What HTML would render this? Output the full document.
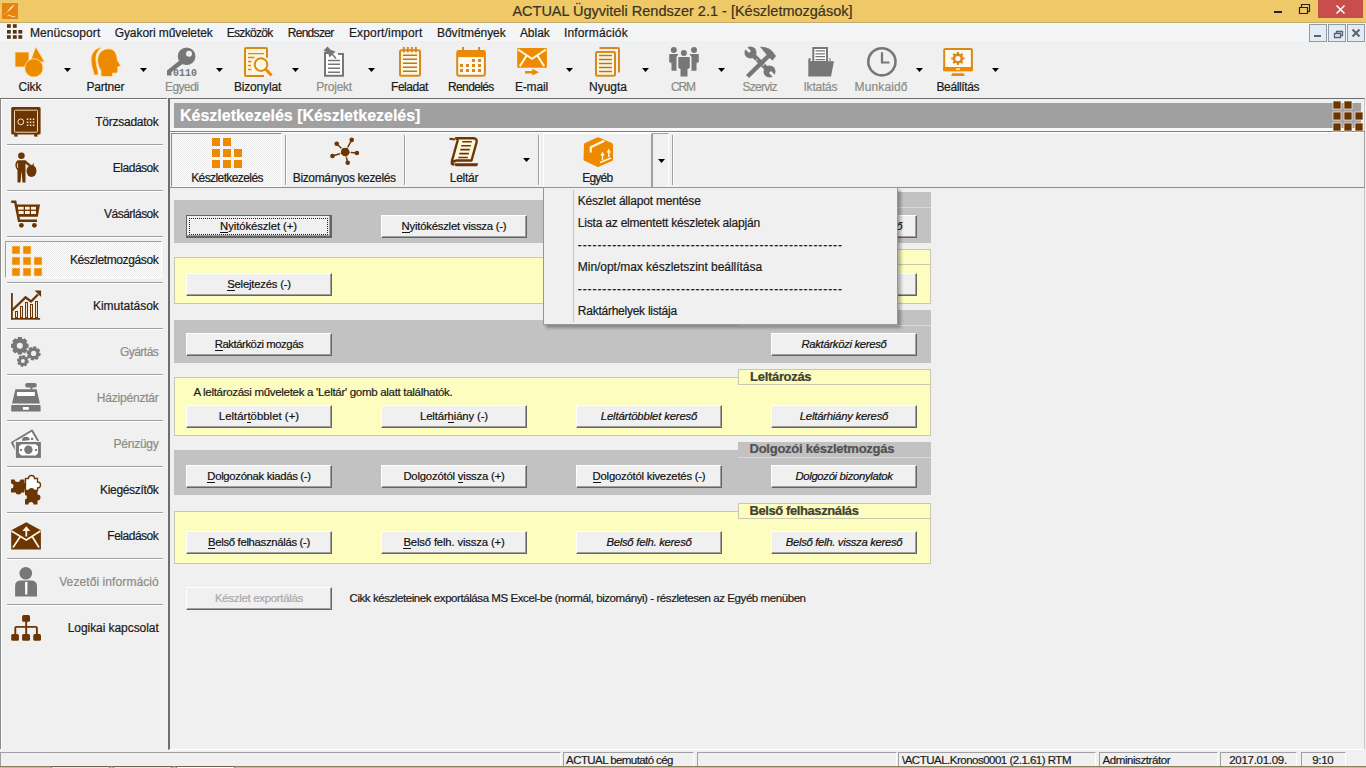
<!DOCTYPE html>
<html><head><meta charset="utf-8">
<style>
*{box-sizing:border-box}
html,body{margin:0;padding:0;width:1366px;height:768px;overflow:hidden;background:#f0f0f0;font-family:"Liberation Sans",sans-serif;color:#1a1a1a}
.a{position:absolute}
.t{position:absolute;white-space:pre;line-height:1;-webkit-text-stroke:0.2px currentColor}
#title{left:0;top:0;width:1366px;height:24px;background:#efc868;border-bottom:1px solid #fdf6e0}
#title:after{content:"";position:absolute;left:0;top:22px;width:1366px;height:1px;background:#c4aa6e}
#menubar{left:0;top:24px;width:1366px;height:18px;background:#f4f5f7;border-bottom:1px solid #e5e6e7}
#toolbar{left:0;top:41px;width:1366px;height:56px;background:#f0f0f0}
#side{left:0;top:98px;width:167px;height:651px;border-top:1px solid #6e6e6e;border-left:1px solid #8a8a8a;background:#f0f0f0}
#side:after{content:"";position:absolute;left:0;top:0;right:0;bottom:0;border-top:1px solid #fff;border-left:1px solid #fff}
.sep{position:absolute;left:7px;width:156px;height:2px;border-top:1px solid #a0a0a0;border-bottom:1px solid #fff}
#main{left:168px;top:98px;width:1197px;height:652px;border-top:1px solid #6e6e6e;border-left:2px solid #6e6e6e;border-right:1px solid #c8c8c8;border-bottom:1px solid #fff;background:#f0f0f0}
#hdr{left:174px;top:103px;width:1187px;height:25px;background:#a0a0a0}
#tabstrip{left:170px;top:131px;width:1195px;height:57px;border-top:1px solid #808080;border-bottom:1px solid #8e8e8e;border-right:1px solid #a0a0a0;background:#f0f0f0}
#tabstrip:before{content:"";position:absolute;left:0;right:0;top:0;height:1px;background:#fff}
#hdrgap{left:170px;top:128px;width:1193px;height:3px;background:#f8f8f8}
.chk{background:repeating-conic-gradient(#ffffff 0 25%,#e9e9e9 0 50%) 0 0/2px 2px}
#seltab{left:171px;top:133px;width:111px;height:54px;border-top:1px solid #8a8a8a;border-left:1px solid #8a8a8a;border-right:1px solid #fff;border-bottom:1px solid #fff}
#egy{left:543px;top:133px;width:109px;height:54px;border-top:1px solid #fff;border-left:1px solid #fff;border-right:1px solid #a0a0a0}
#egyd{left:652px;top:133px;width:17px;height:54px;border-top:1px solid #a0a0a0;border-left:1px solid #a0a0a0;border-right:1px solid #fff}
#popsep{left:573px;top:190px;width:1px;height:132px;background:#c8c8c8}
.vsep{position:absolute;width:2px;border-left:1px solid #a0a0a0;border-right:1px solid #fff}
.sec{position:absolute;left:174px;width:757px}
.gray{background:#c2c2c2}
.yel{background:#fdfdc0;border:1px solid #c8c8b0}
.stab{position:absolute;left:738px;width:193px;height:16px}
.stab.gray{background:#c2c2c2;border-bottom:1px solid #d8d8d8}
.stab.yel{background:#fdfdc0;border:1px solid #c8c8b0}
.btn{position:absolute;width:146px;height:23px;background:#f0f0f0;border-top:1px solid #fff;border-left:1px solid #fff;border-right:1px solid #646464;border-bottom:1px solid #646464;font-size:11.3px;text-align:center;line-height:20px;white-space:pre;color:#111}
.btn:before{content:"";position:absolute;left:0;top:0;right:0;bottom:0;border-right:1px solid #a0a0a0;border-bottom:1px solid #a0a0a0}
.btn span{position:relative;-webkit-text-stroke:0.2px currentColor}
.btn.it{font-style:italic}
.btn.dis{color:#a8a8a8}
.btn.foc{border:1px solid #646464;border-right:2px solid #646464;border-bottom:2px solid #646464}
.btn.foc:after{content:"";position:absolute;left:2px;top:2px;right:2px;bottom:1px;border:1px dotted #222}
u{text-decoration:none;border-bottom:1px solid currentColor}
#popup{left:543px;top:187px;width:355px;height:138px;background:#f0f0f0;border:1px solid #979797;box-shadow:3px 3px 3px rgba(0,0,0,.3)}
#status{left:0;top:750px;width:1366px;height:18px;background:#f0f0f0}
.sp{position:absolute;top:752px;height:14px;border-top:1px solid #a0a0a0;border-left:1px solid #a0a0a0;border-right:1px solid #fff}
</style></head><body>
<div id="title" class="a"></div>
<div id="menubar" class="a"></div>
<div id="toolbar" class="a"></div>
<div id="side" class="a"></div>
<div id="main" class="a"></div>
<div id="hdr" class="a"></div>
<div id="hdrgap" class="a"></div>
<div id="tabstrip" class="a"></div>
<div id="seltab" class="a chk"></div>
<div id="egy" class="a"></div>
<div id="egyd" class="a"></div>
<div class="sep" style="top:144px"></div>
<div class="sep" style="top:190px"></div>
<div class="sep" style="top:236px"></div>
<div class="sep" style="top:282px"></div>
<div class="sep" style="top:328px"></div>
<div class="sep" style="top:374px"></div>
<div class="sep" style="top:420px"></div>
<div class="sep" style="top:466px"></div>
<div class="sep" style="top:512px"></div>
<div class="sep" style="top:558px"></div>
<div class="sep" style="top:604px"></div>
<div class="a chk" style="left:5px;top:241px;width:157px;height:37px;border-top:1px solid #a0a0a0;border-left:1px solid #a0a0a0;border-bottom:1px solid #fff;border-right:1px solid #fff;"></div>
<div class="sec gray" style="top:200px;height:43px"></div>
<div class="stab gray" style="top:192px"></div>
<div class="sec yel" style="top:257px;height:47px"></div>
<div class="stab yel" style="top:249px"></div>
<div class="sec gray" style="top:320px;height:43px"></div>
<div class="stab gray" style="top:310px"></div>
<div class="sec yel" style="top:377px;height:59px"></div>
<div class="stab yel" style="top:369px"></div>
<div class="sec gray" style="top:450px;height:45px"></div>
<div class="stab gray" style="top:442px"></div>
<div class="sec yel" style="top:511px;height:53px"></div>
<div class="stab yel" style="top:503px"></div>
<div class="vsep" style="left:285px;top:135px;height:50px"></div>
<div class="vsep" style="left:404px;top:135px;height:50px"></div>
<div class="vsep" style="left:538px;top:135px;height:50px"></div>
<div class="vsep" style="left:672px;top:135px;height:50px"></div>
<div class="btn foc" style="left:186px;top:215px"><span style="letter-spacing:-0.078px"><u>N</u>yitókészlet (+)</span></div>
<div class="btn" style="left:381px;top:215px"><span style="letter-spacing:-0.221px"><u>N</u>yitókészlet vissza (-)</span></div>
<div class="btn it" style="left:771px;top:215px"><span style="letter-spacing:-0.450px">Nyitókészlet részl. kereső</span></div>
<div class="btn" style="left:186px;top:273px"><span style="letter-spacing:-0.211px"><u>S</u>elejtezés (-)</span></div>
<div class="btn it" style="left:771px;top:273px"><span style="letter-spacing:-0.450px">Selejtezés kereső</span></div>
<div class="btn" style="left:186px;top:333px"><span style="letter-spacing:-0.454px"><u>R</u>aktárközi mozgás</span></div>
<div class="btn it" style="left:771px;top:333px"><span style="letter-spacing:-0.314px">Raktárközi kereső</span></div>
<div class="btn" style="left:186px;top:405px"><span style="letter-spacing:0.048px">Leltár<u>t</u>öbblet (+)</span></div>
<div class="btn" style="left:381px;top:405px"><span style="letter-spacing:-0.122px">Leltár<u>h</u>iány (-)</span></div>
<div class="btn it" style="left:576px;top:405px"><span style="letter-spacing:-0.144px">Leltártöbblet kereső</span></div>
<div class="btn it" style="left:771px;top:405px"><span style="letter-spacing:-0.218px">Leltárhiány kereső</span></div>
<div class="btn" style="left:186px;top:465px"><span style="letter-spacing:-0.315px"><u>D</u>olgozónak kiadás (-)</span></div>
<div class="btn" style="left:381px;top:465px"><span style="letter-spacing:-0.189px">Dolgozótól <u>v</u>issza (+)</span></div>
<div class="btn" style="left:576px;top:465px"><span style="letter-spacing:-0.219px"><u>D</u>olgozótól kivezetés (-)</span></div>
<div class="btn it" style="left:771px;top:465px"><span style="letter-spacing:-0.322px">Dolgozói bizonylatok</span></div>
<div class="btn" style="left:186px;top:531px"><span style="letter-spacing:-0.301px"><u>B</u>első felhasználás (-)</span></div>
<div class="btn" style="left:381px;top:531px"><span style="letter-spacing:-0.150px"><u>B</u>első felh. vissza (+)</span></div>
<div class="btn it" style="left:576px;top:531px"><span style="letter-spacing:-0.259px">Belső felh. kereső</span></div>
<div class="btn it" style="left:771px;top:531px"><span style="letter-spacing:-0.314px">Belső felh. vissza kereső</span></div>
<div class="btn dis" style="left:186px;top:587px"><span style="letter-spacing:-0.242px">Készlet exportálás</span></div>
<div id="popup" class="a"></div>
<div id="popsep" class="a"></div>
<div class="sp" style="left:0px;width:561px"></div>
<div class="sp" style="left:563px;width:131px"></div>
<div class="sp" style="left:697px;width:200px"></div>
<div class="sp" style="left:898px;width:198px"></div>
<div class="sp" style="left:1099px;width:119px"></div>
<div class="sp" style="left:1220px;width:77px"></div>
<div class="sp" style="left:1301px;width:45px"></div>
<div class="a" style="left:0;top:766px;width:1366px;height:2px;background:#c9b999;border-top:1px solid #8f8062"></div>
<div class="a" style="left:51px;top:766px;width:59px;height:2px;background:#ebe5d2;border-top:1px solid #6f6450;border-left:1px solid #8f8062;border-right:1px solid #8f8062"></div>
<div class="a" style="left:113px;top:766px;width:59px;height:2px;background:#ebe5d2;border-top:1px solid #6f6450;border-left:1px solid #8f8062;border-right:1px solid #8f8062"></div>
<div class="a" style="left:176px;top:766px;width:59px;height:2px;background:#fbfaf6;border-top:1px solid #6f6450;border-left:1px solid #8f8062;border-right:1px solid #8f8062"></div>
<div class="t" style="left:512.4px;top:4.1px;font-size:14.5px;font-weight:normal;font-style:normal;color:#3a3320;letter-spacing:-0.005px">ACTUAL Ügyviteli Rendszer 2.1 - [Készletmozgások]</div>
<div class="t" style="left:29.9px;top:26.5px;font-size:12px;font-weight:normal;font-style:normal;color:#1a1a1a;letter-spacing:0.103px">Menücsoport</div>
<div class="t" style="left:114.7px;top:26.5px;font-size:12px;font-weight:normal;font-style:normal;color:#1a1a1a;letter-spacing:-0.080px">Gyakori műveletek</div>
<div class="t" style="left:226.7px;top:26.5px;font-size:12px;font-weight:normal;font-style:normal;color:#1a1a1a;letter-spacing:-0.680px">Eszközök</div>
<div class="t" style="left:287.7px;top:26.5px;font-size:12px;font-weight:normal;font-style:normal;color:#1a1a1a;letter-spacing:-0.694px">Rendszer</div>
<div class="t" style="left:348.9px;top:26.5px;font-size:12px;font-weight:normal;font-style:normal;color:#1a1a1a;letter-spacing:0.170px">Export/import</div>
<div class="t" style="left:437.0px;top:26.5px;font-size:12px;font-weight:normal;font-style:normal;color:#1a1a1a;letter-spacing:-0.068px">Bővítmények</div>
<div class="t" style="left:519.9px;top:26.5px;font-size:12px;font-weight:normal;font-style:normal;color:#1a1a1a;letter-spacing:-0.033px">Ablak</div>
<div class="t" style="left:563.9px;top:26.5px;font-size:12px;font-weight:normal;font-style:normal;color:#1a1a1a;letter-spacing:0.177px">Információk</div>
<div class="t" style="left:18.5px;top:81.1px;font-size:12px;font-weight:normal;font-style:normal;color:#1a1a1a;letter-spacing:-0.115px">Cikk</div>
<div class="t" style="left:86.5px;top:81.1px;font-size:12px;font-weight:normal;font-style:normal;color:#1a1a1a;letter-spacing:-0.227px">Partner</div>
<div class="t" style="left:165.0px;top:81.1px;font-size:12px;font-weight:normal;font-style:normal;color:#8c8c84;letter-spacing:-0.541px">Egyedi</div>
<div class="t" style="left:233.9px;top:81.1px;font-size:12px;font-weight:normal;font-style:normal;color:#1a1a1a;letter-spacing:-0.163px">Bizonylat</div>
<div class="t" style="left:316.3px;top:81.1px;font-size:12px;font-weight:normal;font-style:normal;color:#8c8c84;letter-spacing:-0.243px">Projekt</div>
<div class="t" style="left:391.0px;top:81.1px;font-size:12px;font-weight:normal;font-style:normal;color:#1a1a1a;letter-spacing:-0.455px">Feladat</div>
<div class="t" style="left:448.1px;top:81.1px;font-size:12px;font-weight:normal;font-style:normal;color:#1a1a1a;letter-spacing:-0.658px">Rendelés</div>
<div class="t" style="left:514.9px;top:81.1px;font-size:12px;font-weight:normal;font-style:normal;color:#1a1a1a;letter-spacing:-0.163px">E-mail</div>
<div class="t" style="left:589.1px;top:81.1px;font-size:12px;font-weight:normal;font-style:normal;color:#1a1a1a;letter-spacing:-0.046px">Nyugta</div>
<div class="t" style="left:671.1px;top:81.1px;font-size:12px;font-weight:normal;font-style:normal;color:#8c8c84;letter-spacing:-1.214px">CRM</div>
<div class="t" style="left:742.5px;top:81.1px;font-size:12px;font-weight:normal;font-style:normal;color:#8c8c84;letter-spacing:-0.724px">Szerviz</div>
<div class="t" style="left:803.5px;top:81.1px;font-size:12px;font-weight:normal;font-style:normal;color:#8c8c84;letter-spacing:-0.227px">Iktatás</div>
<div class="t" style="left:854.5px;top:81.1px;font-size:12px;font-weight:normal;font-style:normal;color:#8c8c84;letter-spacing:0.138px">Munkaidő</div>
<div class="t" style="left:936.5px;top:81.1px;font-size:12px;font-weight:normal;font-style:normal;color:#1a1a1a;letter-spacing:-0.379px">Beállítás</div>
<div class="t" style="left:95.2px;top:115.6px;font-size:12px;font-weight:normal;font-style:normal;color:#1a1a1a;letter-spacing:-0.243px">Törzsadatok</div>
<div class="t" style="left:112.8px;top:161.6px;font-size:12px;font-weight:normal;font-style:normal;color:#1a1a1a;letter-spacing:-0.482px">Eladások</div>
<div class="t" style="left:104.0px;top:207.6px;font-size:12px;font-weight:normal;font-style:normal;color:#1a1a1a;letter-spacing:-0.508px">Vásárlások</div>
<div class="t" style="left:69.9px;top:253.6px;font-size:12px;font-weight:normal;font-style:normal;color:#1a1a1a;letter-spacing:-0.368px">Készletmozgások</div>
<div class="t" style="left:92.9px;top:299.6px;font-size:12px;font-weight:normal;font-style:normal;color:#1a1a1a;letter-spacing:-0.013px">Kimutatások</div>
<div class="t" style="left:119.9px;top:345.6px;font-size:12px;font-weight:normal;font-style:normal;color:#8c8c84;letter-spacing:-0.519px">Gyártás</div>
<div class="t" style="left:96.8px;top:391.6px;font-size:12px;font-weight:normal;font-style:normal;color:#8c8c84;letter-spacing:-0.203px">Házipénztár</div>
<div class="t" style="left:113.5px;top:437.6px;font-size:12px;font-weight:normal;font-style:normal;color:#8c8c84;letter-spacing:-0.234px">Pénzügy</div>
<div class="t" style="left:100.1px;top:483.6px;font-size:12px;font-weight:normal;font-style:normal;color:#1a1a1a;letter-spacing:-0.335px">Kiegészítők</div>
<div class="t" style="left:107.3px;top:529.6px;font-size:12px;font-weight:normal;font-style:normal;color:#1a1a1a;letter-spacing:-0.484px">Feladások</div>
<div class="t" style="left:59.2px;top:575.6px;font-size:12px;font-weight:normal;font-style:normal;color:#8c8c84;letter-spacing:0.090px">Vezetői információ</div>
<div class="t" style="left:67.7px;top:621.6px;font-size:12px;font-weight:normal;font-style:normal;color:#1a1a1a;letter-spacing:-0.060px">Logikai kapcsolat</div>
<div class="t" style="left:180.1px;top:107.8px;font-size:16px;font-weight:bold;font-style:normal;color:#ffffff;letter-spacing:-0.024px">Készletkezelés [Készletkezelés]</div>
<div class="t" style="left:191.2px;top:172.2px;font-size:12px;font-weight:normal;font-style:normal;color:#1a1a1a;letter-spacing:-0.596px">Készletkezelés</div>
<div class="t" style="left:292.8px;top:172.0px;font-size:12px;font-weight:normal;font-style:normal;color:#1a1a1a;letter-spacing:-0.364px">Bizományos kezelés</div>
<div class="t" style="left:449.8px;top:172.0px;font-size:12px;font-weight:normal;font-style:normal;color:#1a1a1a;letter-spacing:-0.266px">Leltár</div>
<div class="t" style="left:582.2px;top:172.0px;font-size:12px;font-weight:normal;font-style:normal;color:#1a1a1a;letter-spacing:-0.758px">Egyéb</div>
<div class="t" style="left:750.1px;top:369.8px;font-size:13px;font-weight:bold;font-style:normal;color:#404030;letter-spacing:-0.312px">Leltározás</div>
<div class="t" style="left:749.5px;top:441.8px;font-size:13px;font-weight:bold;font-style:normal;color:#505050;letter-spacing:-0.250px">Dolgozói készletmozgás</div>
<div class="t" style="left:749.5px;top:503.8px;font-size:13px;font-weight:bold;font-style:normal;color:#404030;letter-spacing:-0.408px">Belső felhasználás</div>
<div class="t" style="left:193.4px;top:386.6px;font-size:11.5px;font-weight:normal;font-style:normal;color:#1a1a1a;letter-spacing:-0.298px">A leltározási műveletek a &#x27;Leltár&#x27; gomb alatt találhatók.</div>
<div class="t" style="left:349.5px;top:593.1px;font-size:11.5px;font-weight:normal;font-style:normal;color:#1a1a1a;letter-spacing:-0.427px">Cikk készleteinek exportálása MS Excel-be (normál, bizományi) - részletesen az Egyéb menüben</div>
<div class="t" style="left:577.8px;top:195.3px;font-size:12px;font-weight:normal;font-style:normal;color:#1a1a1a;letter-spacing:-0.200px">Készlet állapot mentése</div>
<div class="t" style="left:577.8px;top:217.2px;font-size:12px;font-weight:normal;font-style:normal;color:#1a1a1a;letter-spacing:-0.204px">Lista az elmentett készletek alapján</div>
<div class="t" style="left:577.8px;top:238.5px;font-size:12px;font-weight:normal;font-style:normal;color:#1a1a1a;letter-spacing:0.913px">------------------------------------------------------</div>
<div class="t" style="left:577.8px;top:261.3px;font-size:12px;font-weight:normal;font-style:normal;color:#1a1a1a;letter-spacing:-0.033px">Min/opt/max készletszint beállítása</div>
<div class="t" style="left:577.8px;top:282.6px;font-size:12px;font-weight:normal;font-style:normal;color:#1a1a1a;letter-spacing:0.913px">------------------------------------------------------</div>
<div class="t" style="left:577.8px;top:305.0px;font-size:12px;font-weight:normal;font-style:normal;color:#1a1a1a;letter-spacing:-0.250px">Raktárhelyek listája</div>
<div class="t" style="left:566.1px;top:754.9px;font-size:11.5px;font-weight:normal;font-style:normal;color:#1a1a1a;letter-spacing:-0.579px">ACTUAL bemutató cég</div>
<div class="t" style="left:902.0px;top:754.9px;font-size:11.5px;font-weight:normal;font-style:normal;color:#1a1a1a;letter-spacing:-0.501px">\ACTUAL.Kronos0001 (2.1.61) RTM</div>
<div class="t" style="left:1102.5px;top:754.9px;font-size:11.5px;font-weight:normal;font-style:normal;color:#1a1a1a;letter-spacing:-0.423px">Adminisztrátor</div>
<div class="t" style="left:1229.2px;top:754.9px;font-size:11.5px;font-weight:normal;font-style:normal;color:#1a1a1a;letter-spacing:-0.277px">2017.01.09.</div>
<div class="t" style="left:1312.3px;top:754.9px;font-size:11.5px;font-weight:normal;font-style:normal;color:#1a1a1a;letter-spacing:-0.364px">9:10</div>
<svg class="a" style="left:0;top:0" width="1366" height="768" viewBox="0 0 1366 768"><rect x="2" y="3" width="16" height="16" fill="#e8830f"/><path d="M14.5 4 Q13 8 7 12.5 L6 13.5 Q9 8 14.5 4Z" fill="#fff3d0"/><path d="M5 13.8 L4.5 14.5 M7.5 16 Q9.5 14.5 11 16 Q12.5 17 15 16.5" stroke="#fff3d0" stroke-width="0.9" fill="none"/><rect x="7" y="24.2" width="3.8" height="3.6" fill="#5a3210"/><rect x="12.9" y="24.2" width="3.8" height="3.6" fill="#5a3210"/><rect x="7" y="30" width="3.8" height="3.6" fill="#5a3210"/><rect x="12.9" y="30" width="3.8" height="3.6" fill="#5a3210"/><rect x="18.4" y="30" width="3.8" height="3.6" fill="#5a3210"/><rect x="7" y="35.2" width="3.8" height="3.6" fill="#5a3210"/><rect x="12.9" y="35.2" width="3.8" height="3.6" fill="#5a3210"/><rect x="18.4" y="35.2" width="3.8" height="3.6" fill="#5a3210"/><rect x="1309.5" y="24.5" width="17" height="17" fill="#e3ecf5" stroke="#8d9aa8"/><rect x="1328.5" y="24.5" width="17" height="17" fill="#e3ecf5" stroke="#8d9aa8"/><rect x="1347.5" y="24.5" width="17" height="17" fill="#e3ecf5" stroke="#8d9aa8"/><rect x="1314" y="35" width="7" height="2" fill="#59636e"/><path d="M1334.5 33.5h6v4h-6z M1336.5 33.5v-2h6v4h-2" stroke="#59636e" stroke-width="1.3" fill="none"/><path d="M1352.5 29.5l7 7 M1359.5 29.5l-7 7" stroke="#59636e" stroke-width="2"/><rect x="1274" y="11" width="8" height="2" fill="#222"/><path d="M1299.5 7.5h8v6h-8z M1301.5 7.5v-3h8v7h-2" stroke="#222" stroke-width="1.2" fill="none"/><rect x="1318" y="0" width="45" height="18" fill="#c84e4c"/><path d="M1336.5 5.5l8 8 M1344.5 5.5l-8 8" stroke="#fff" stroke-width="1.5"/><g fill="#ee8a00" stroke="#ffe8b8" stroke-width="0.8"><rect x="15" y="52" width="14" height="15"/><path d="M35.8 46.8 L44.7 62 L30 62 Z"/><circle cx="33.9" cy="67.9" r="9.2"/></g><path d="M64 68h7l-3.5 4z" fill="#000"/><path d="M140 68h7l-3.5 4z" fill="#000"/><path d="M216 68h7l-3.5 4z" fill="#000"/><path d="M292 68h7l-3.5 4z" fill="#000"/><path d="M368 68h7l-3.5 4z" fill="#000"/><path d="M566 68h7l-3.5 4z" fill="#000"/><path d="M642 68h7l-3.5 4z" fill="#000"/><path d="M718 68h7l-3.5 4z" fill="#000"/><path d="M916 68h7l-3.5 4z" fill="#000"/><path d="M992 68h7l-3.5 4z" fill="#000"/><g fill="#ee8a00" stroke="#ffe8b8" stroke-width="0.9"><path d="M103 47.3 C95 47.5 91 53 91 60 C91 66 93 69 94 75 L98.5 75 C98 69 96 65 96 59 C96 53 99 49 103 47.3Z"/><path d="M109 48.8 C102 48.8 97.5 53.5 97.5 60.5 C97.5 65.5 100 68.5 101 71 L101 76.6 L112.6 76.6 L112.6 73.2 L116 73.2 C118 73.2 118 71 117.8 69 L117.8 67 L120.8 65.8 L117.5 60.5 C117 53 114 48.8 109 48.8Z"/></g><g fill="#777777"><circle cx="186.6" cy="56.2" r="8.8"/><path d="M180 60 L167 70.5 L167 75.6 L171.5 75.6 L171.5 72 L184 63Z"/></g><circle cx="189" cy="53.8" r="3" fill="#f0f0f0"/><text x="173" y="76" font-family="Liberation Mono" font-weight="bold" font-size="10" fill="#777777" textLength="24" lengthAdjust="spacingAndGlyphs">0110</text><path d="M264 76 L246 76 Q245 76 245 75 L245 49 Q245 48 246 48 L266 48 Q267 48 267 49 L267 57.8" fill="#fff7dc" stroke="#d8891e" stroke-width="2"/><g stroke="#d8891e" stroke-width="1.3"><path d="M248 53.6h16 M248 57.5h6.5 M248 61.5h3.5 M248 65.5h3 M248 69.5h3.5"/></g><circle cx="261" cy="64.6" r="6.3" fill="#fff7dc" stroke="#d8891e" stroke-width="2"/><path d="M265.5 69 L271.5 75.5" stroke="#ee8a00" stroke-width="3"/><path d="M329 53.1 L325 53.1 L325 75.8 L343 75.8 L343 54 L338 54" fill="#fff" stroke="#777777" stroke-width="2"/><g stroke="#777777" stroke-width="1.5"><path d="M328 60.4h12 M328 64.3h12 M328 68.2h12 M328 72.2h12"/></g><path d="M323.5 50.5 L327.5 46.5 L331 50 L335.5 51.5 L329.5 57.5 L328 53Z" fill="#777777"/><path d="M332.5 54.5 L336 58.5" stroke="#777777" stroke-width="1.6"/><rect x="400" y="50.2" width="20" height="25.6" rx="1.5" fill="#fff7dc" stroke="#d8891e" stroke-width="2"/><g fill="#d8891e"><rect x="402.8" y="47" width="2" height="5.4"/><rect x="406.8" y="47" width="2" height="5.4"/><rect x="410.8" y="47" width="2" height="5.4"/><rect x="414.8" y="47" width="2" height="5.4"/></g><g stroke="#b07a30" stroke-width="1.5"><path d="M403 55.3h14 M403 59.3h14 M403 63.3h14 M403 67.3h14 M403 71.3h14"/></g><rect x="457.2" y="50.9" width="27.7" height="24.9" rx="2" fill="#fffaf0" stroke="#d8891e" stroke-width="2"/><rect x="457" y="50.5" width="28" height="6.6" fill="#ee8a00"/><g fill="#d8891e"><rect x="462" y="47" width="2" height="6.4"/><rect x="478.1" y="47" width="2" height="6.4"/><rect x="472" y="59" width="3" height="3"/><rect x="478" y="59" width="3" height="3"/><rect x="460" y="64" width="3" height="3"/><rect x="466" y="64" width="3" height="3"/><rect x="472" y="64" width="3" height="3"/><rect x="478" y="64" width="3" height="3"/><rect x="460" y="69" width="3" height="3"/><rect x="466" y="69" width="3" height="3"/><rect x="472" y="69" width="3" height="3"/><rect x="478" y="69" width="3" height="3"/></g><rect x="517.2" y="48" width="29.7" height="19.7" rx="0.8" fill="#ee8a00"/><path d="M518 49.5 L532 58.8 L546 49.5 M519.8 66.3 L526.3 56 M544.2 66.3 L537.7 56" stroke="#fff7dc" stroke-width="2.1" fill="none"/><path d="M525 70.9h7.3v-2.2l6.6 3.5 -6.6 3.4v-2.2h-7.3z" fill="#ee8a00"/><path d="M599.5 48 L618 48 Q619 48 619 49 L619 72.6" fill="none" stroke="#d8891e" stroke-width="2"/><rect x="596" y="52" width="19" height="23.8" rx="1.5" fill="#fff7dc" stroke="#d8891e" stroke-width="2"/><g stroke="#a87a38" stroke-width="1.5"><path d="M599 55.5h13 M599 59.5h13 M599 63.5h13 M599 67.5h13 M599 71.5h13"/></g><g fill="#777777"><circle cx="673.8" cy="49.9" r="3"/><circle cx="694" cy="49.9" r="3"/><circle cx="683.9" cy="52.9" r="3"/><path d="M669.2 55 Q669.2 54 670.2 54 L678.5 54 L676.5 57 L676.5 70.7 L671.5 70.7 L671.5 63.3 L669.2 62Z"/><path d="M698.8 55 Q698.8 54 697.8 54 L689.5 54 L691.5 57 L691.5 70.7 L696.5 70.7 L696.5 63.3 L698.8 62Z"/><path d="M678.3 58 Q678.3 57 679.3 57 L688.8 57 Q689.8 57 689.8 58 L689.8 68 L687.5 69 L687.5 76.6 L680.5 76.6 L680.5 69 L678.3 68Z"/></g><g fill="#777777"><path d="M752 54 L769 71" stroke="#777777" stroke-width="4.6"/><circle cx="750.5" cy="52.5" r="6"/><circle cx="769.5" cy="71.5" r="6"/><path d="M760 46.8 Q768 46.5 773 52 L776 56 L772.5 60.5 L768.5 57 Z"/><path d="M768.5 56 L747.5 76.5" stroke="#777777" stroke-width="4.4"/></g><g stroke="#f0f0f0" stroke-width="2.8"><path d="M742.5 44.5 L750 52"/><path d="M777.5 79.5 L770 72"/></g><path d="M754.5 62 L757.5 59 M762.5 66 L765.5 63" stroke="#f0f0f0" stroke-width="1"/><rect x="813.3" y="48" width="13.7" height="14" fill="#fff" stroke="#777777" stroke-width="2"/><g stroke="#777777" stroke-width="1.3"><path d="M815.5 50.8h9.5 M815.5 53.8h9.5 M815.5 56.7h9.5 M815.5 59.7h9.5"/></g><path d="M808.3 59.5 Q808.3 58 809.8 58 L810.5 58 L810.5 61.3 L829.5 61.3 L829.5 58 L830.5 58 L830.5 61.3 L834 61.3 L831 76.6 L808.3 76.6Z" fill="#777777"/><circle cx="881.9" cy="61.8" r="13.6" fill="none" stroke="#777777" stroke-width="2.6"/><path d="M882 52.3 V62.5 H889.5" fill="none" stroke="#777777" stroke-width="2.2"/><rect x="944.2" y="49" width="27.7" height="21.2" rx="1" fill="#fffaf0" stroke="#d8891e" stroke-width="2"/><rect x="943.2" y="67" width="29.7" height="4.2" fill="#ee8a00"/><rect x="956" y="68.5" width="4" height="1.3" fill="#fff7dc"/><path d="M951 76 L952.5 73.3 L963.5 73.3 L965 76Z" fill="#ee8a00"/><polygon points="962.77,57.38 964.52,57.49 964.52,59.51 962.77,59.62 962.14,61.15 963.30,62.47 961.87,63.90 960.55,62.74 959.02,63.37 958.91,65.12 956.89,65.12 956.78,63.37 955.25,62.74 953.93,63.90 952.50,62.47 953.66,61.15 953.03,59.62 951.28,59.51 951.28,57.49 953.03,57.38 953.66,55.85 952.50,54.53 953.93,53.10 955.25,54.26 956.78,53.63 956.89,51.88 958.91,51.88 959.02,53.63 960.55,54.26 961.87,53.10 963.30,54.53 962.14,55.85" fill="#d8891e"/><circle cx="957.9" cy="58.5" r="4.90" fill="#d8891e"/><circle cx="957.9" cy="58.5" r="2.6" fill="#fffaf0"/><rect x="11.2" y="107" width="29.4" height="27.6" rx="1.5" fill="#6b3504"/><rect x="14.5" y="110.2" width="23" height="22" rx="1" fill="none" stroke="#ffe7c8" stroke-width="0.9"/><rect x="14.3" y="134" width="3.3" height="2.6" fill="#6b3504"/><rect x="34.2" y="134" width="3.3" height="2.6" fill="#6b3504"/><circle cx="20.8" cy="121.8" r="2.9" fill="none" stroke="#ffe7c8" stroke-width="1"/><rect x="26.8" y="118.5" width="1.5" height="1.5" fill="#ffe7c8"/><rect x="26.8" y="121.5" width="1.5" height="1.5" fill="#ffe7c8"/><rect x="26.8" y="124.5" width="1.5" height="1.5" fill="#ffe7c8"/><rect x="29.8" y="118.5" width="1.5" height="1.5" fill="#ffe7c8"/><rect x="29.8" y="121.5" width="1.5" height="1.5" fill="#ffe7c8"/><rect x="29.8" y="124.5" width="1.5" height="1.5" fill="#ffe7c8"/><rect x="32.8" y="118.5" width="1.5" height="1.5" fill="#ffe7c8"/><rect x="32.8" y="121.5" width="1.5" height="1.5" fill="#ffe7c8"/><rect x="32.8" y="124.5" width="1.5" height="1.5" fill="#ffe7c8"/><g fill="#6b3504"><circle cx="21.4" cy="155.8" r="3.3"/><path d="M17.5 160.3 L25.5 160.3 L30 164.5 L28.5 166 L25.5 163.5 L25.5 169.5 L25.5 182.6 L22.5 182.6 L21.5 171 L20.5 182.6 L17.5 182.6 L17.5 170 Q14.5 167 15.8 162.5Z"/><ellipse cx="31.5" cy="171" rx="5" ry="6"/><path d="M29 163 L31.5 165.5 L34 163 L33.5 166 L29.5 166Z"/></g><path d="M17.8 163.2 Q16.8 166 17.8 167.8" stroke="#f0f0f0" stroke-width="0.9" fill="none"/><g fill="#6b3504"><path d="M11.2 200.6 L16.2 200.6 L20 219.5 L37 219.5 L37 222 L18 222 L14.2 203 L11.2 203Z"/><path d="M15.2 204.5 L40 204.5 L37.8 216.8 L18.2 216.8Z"/><circle cx="21.4" cy="225.3" r="2.4"/><circle cx="34.4" cy="225.3" r="2.4"/></g><g fill="#fff0dc"><rect x="18" y="206.8" width="5.7" height="2.8"/><rect x="25" y="206.8" width="4.7" height="2.8"/><rect x="31" y="206.8" width="5" height="2.8"/><rect x="18.6" y="210.9" width="5.1" height="3.1"/><rect x="25" y="210.9" width="4.7" height="3.1"/><rect x="31" y="210.9" width="5" height="3.1"/></g><rect x="12" y="246" width="8" height="8" fill="#ee8a00" stroke="#ffe0a8" stroke-width="0.6"/><rect x="23" y="246" width="8" height="8" fill="#ee8a00" stroke="#ffe0a8" stroke-width="0.6"/><rect x="12" y="257" width="8" height="8" fill="#ee8a00" stroke="#ffe0a8" stroke-width="0.6"/><rect x="23" y="257" width="8" height="8" fill="#ee8a00" stroke="#ffe0a8" stroke-width="0.6"/><rect x="34" y="257" width="8" height="8" fill="#ee8a00" stroke="#ffe0a8" stroke-width="0.6"/><rect x="12" y="268" width="8" height="8" fill="#ee8a00" stroke="#ffe0a8" stroke-width="0.6"/><rect x="23" y="268" width="8" height="8" fill="#ee8a00" stroke="#ffe0a8" stroke-width="0.6"/><rect x="34" y="268" width="8" height="8" fill="#ee8a00" stroke="#ffe0a8" stroke-width="0.6"/><g fill="#6b3504"><rect x="11" y="293" width="1.8" height="26.6"/><rect x="11" y="318" width="29.1" height="1.7"/></g><rect x="15.5" y="311.5" width="2" height="6.5" fill="#f6e2c8" stroke="#6b3504" stroke-width="1"/><rect x="20.5" y="306.5" width="2" height="11.5" fill="#f6e2c8" stroke="#6b3504" stroke-width="1"/><rect x="25.5" y="302.5" width="2" height="15.5" fill="#f6e2c8" stroke="#6b3504" stroke-width="1"/><rect x="30.5" y="304.5" width="2" height="13.5" fill="#f6e2c8" stroke="#6b3504" stroke-width="1"/><rect x="35.5" y="301.5" width="2" height="16.5" fill="#f6e2c8" stroke="#6b3504" stroke-width="1"/><path d="M12 310.5 L25.5 297.3 L31 301.5 L38 294.5" stroke="#6b3504" stroke-width="2.4" fill="none"/><path d="M36 291 L40.5 291 L40.5 295.5Z" fill="#6b3504" stroke="#6b3504" stroke-width="1.2"/><polygon points="26.61,343.47 28.58,343.84 28.58,347.76 26.61,348.13 26.27,348.97 27.40,350.62 24.62,353.40 22.97,352.27 22.13,352.61 21.76,354.58 17.84,354.58 17.47,352.61 16.63,352.27 14.98,353.40 12.20,350.62 13.33,348.97 12.99,348.13 11.02,347.76 11.02,343.84 12.99,343.47 13.33,342.63 12.20,340.98 14.98,338.20 16.63,339.33 17.47,338.99 17.84,337.02 21.76,337.02 22.13,338.99 22.97,339.33 24.62,338.20 27.40,340.98 26.27,342.63" fill="#777777"/><circle cx="19.8" cy="345.8" r="7.06" fill="#777777"/><circle cx="19.8" cy="345.8" r="3.0" fill="#f0f0f0"/><polygon points="39.15,352.67 40.80,353.26 40.17,356.34 38.43,356.23 38.04,356.81 38.79,358.39 36.17,360.12 35.02,358.82 34.33,358.95 33.74,360.60 30.66,359.97 30.77,358.23 30.19,357.84 28.61,358.59 26.88,355.97 28.18,354.82 28.05,354.13 26.40,353.54 27.03,350.46 28.77,350.57 29.16,349.99 28.41,348.41 31.03,346.68 32.18,347.98 32.87,347.85 33.46,346.20 36.54,346.83 36.43,348.57 37.01,348.96 38.59,348.21 40.32,350.83 39.02,351.98" fill="#777777"/><circle cx="33.6" cy="353.4" r="5.49" fill="#777777"/><circle cx="33.6" cy="353.4" r="2.6" fill="#f0f0f0"/><polygon points="27.46,360.30 28.90,360.78 28.38,363.35 26.87,363.22 26.55,363.70 27.23,365.06 25.04,366.50 24.06,365.35 23.50,365.46 23.02,366.90 20.45,366.38 20.58,364.87 20.10,364.55 18.74,365.23 17.30,363.04 18.45,362.06 18.34,361.50 16.90,361.02 17.42,358.45 18.93,358.58 19.25,358.10 18.57,356.74 20.76,355.30 21.74,356.45 22.30,356.34 22.78,354.90 25.35,355.42 25.22,356.93 25.70,357.25 27.06,356.57 28.50,358.76 27.35,359.74" fill="#777777"/><circle cx="22.9" cy="360.9" r="4.51" fill="#777777"/><circle cx="22.9" cy="360.9" r="2.0" fill="#f0f0f0"/><g fill="#777777"><rect x="25.3" y="383" width="11.4" height="4.6" rx="1.8"/><rect x="30.5" y="387" width="2" height="2.5"/><path d="M15.4 389.2 L36.7 389.2 L39.9 403.5 L12 403.5Z"/><rect x="11.2" y="405.1" width="29.4" height="6.5" rx="1.2"/></g><rect x="16.9" y="392" width="18" height="4" rx="0.8" fill="#fff"/><rect x="22.9" y="406.9" width="6" height="2.9" rx="0.6" fill="#fff"/><path d="M12 442.5 L32 430.5 L38.3 441.3 L17 452 Z" fill="#fff" stroke="#777777" stroke-width="2" stroke-linejoin="round"/><path d="M22 441.5 A4 4 0 0 1 30 440" fill="#777777"/><rect x="31" y="437.8" width="2.2" height="2.2" fill="#777777"/><rect x="14.7" y="440.8" width="27.4" height="18.3" fill="#f0f0f0"/><rect x="15.9" y="442" width="25" height="15.9" fill="#777777"/><path d="M19 446 Q20.5 446 21 444.3 L36 444.3 Q36.5 446 38 446 L38 453.5 Q36.5 453.5 36 455.5 L21 455.5 Q20.5 453.5 19 453.5Z" fill="#fff"/><circle cx="28.4" cy="449.8" r="4.2" fill="#777777"/><rect x="20" y="449" width="2" height="2" fill="#777777"/><rect x="35" y="449" width="2" height="2" fill="#777777"/><path d="M11 479.5 L14.5 479.5 Q15 482 17.5 482 Q20 482 20.5 479.5 L24.5 479.5 L24.5 483 Q27.5 483.5 27.5 486 Q27.5 488.5 24.5 489 L24.5 492.5 L21.5 492.5 Q21 494.5 18.5 494.5 Q16 494.5 15.5 492.5 L11 492.5 L11 488.5 Q13.5 488.5 13.5 486 Q13.5 483.5 11 483.5Z" fill="#6b3504"/><path d="M25.5 478.5 L28.5 478.5 Q28.5 475.5 31.5 475.5 Q34.5 475.5 34.5 478.5 L37.5 478.5 L37.5 482 Q40.5 482 40.5 485 Q40.5 488 37.5 488 L37.5 490.5 L25.5 490.5 L25.5 478.5Z" fill="#fff" stroke="#6b3504" stroke-width="1.3"/><path d="M25 490.5 L28.5 490.5 Q28.5 488 31.5 488 Q34.5 488 34.5 490.5 L37.5 490.5 L37.5 494.5 Q40.5 494.5 40.5 497.5 Q40.5 500.5 37.5 500.5 L37.5 504.5 L33.5 504.5 Q33.5 502 31 502 Q28.5 502 28.5 504.5 L25 504.5 L25 499.5 Q27 499 27 497 Q27 495 25 495Z" fill="#6b3504"/><path d="M11.2 530.3 L26.3 522.3 L40.9 530.3 L40.9 549.6 L11.2 549.6Z" fill="#6b3504"/><path d="M11.5 531 L26.3 540 L40.5 531 M13 547.5 L20 537 M39 547.5 L32.5 537" stroke="#fff3e0" stroke-width="1.7" fill="none"/><path d="M26.3 528 V536.5" stroke="#fff3e0" stroke-width="1.8"/><path d="M22.3 531 L26.3 526.3 L30.3 531Z" fill="#fff3e0"/><circle cx="25.8" cy="573.2" r="6.3" fill="#777777"/><path d="M15.1 596.4 L15.1 586 Q15.1 580.5 21 580.5 L31 580.5 Q37 580.5 37 586 L37 596.4Z" fill="#777777"/><path d="M25 582 L27.5 582 L27.3 594.5 L25.2 594.5Z" fill="#fff"/><g fill="#6b3504"><rect x="22.1" y="615" width="7.9" height="6.8" rx="1.5"/><rect x="11.2" y="634" width="7.7" height="6.8" rx="1.5"/><rect x="22.1" y="634" width="7.9" height="6.8" rx="1.5"/><rect x="33.3" y="634" width="7.7" height="6.8" rx="1.5"/></g><path d="M26.2 621 V634 M15.3 634 V628 Q15.3 626.9 16.5 626.9 L35.7 626.9 Q36.9 626.9 36.9 628 V634" stroke="#6b3504" stroke-width="1.9" fill="none"/><rect x="212" y="138" width="8" height="8" fill="#ee8a00"/><rect x="223" y="138" width="8" height="8" fill="#ee8a00"/><rect x="212" y="149" width="8" height="8" fill="#ee8a00"/><rect x="223" y="149" width="8" height="8" fill="#ee8a00"/><rect x="234" y="149" width="8" height="8" fill="#ee8a00"/><rect x="212" y="160" width="8" height="8" fill="#ee8a00"/><rect x="223" y="160" width="8" height="8" fill="#ee8a00"/><rect x="234" y="160" width="8" height="8" fill="#ee8a00"/><g stroke="#6b3504" stroke-width="1.5"><path d="M345.2 152 L336.7 143.8 M345.2 152 L351.7 139.9 M345.2 152 L356.9 153 M345.2 152 L347.7 162.8 M345.2 152 L332.5 156"/></g><g fill="#6b3504"><circle cx="345.2" cy="152" r="4.3"/><circle cx="336.7" cy="143.8" r="2.3"/><circle cx="351.7" cy="139.9" r="2.3"/><circle cx="356.9" cy="153" r="2.3"/><circle cx="347.7" cy="162.8" r="2.3"/><circle cx="332.5" cy="156" r="2.3"/></g><circle cx="345.2" cy="152" r="5.2" fill="none" stroke="#f0f0f0" stroke-width="0.9"/><path d="M456 138.3 L473.5 138.3 Q477.5 138.5 476.5 142.5 L471.5 160.5 L456.5 160.5 L452 162 Q451 164 453.5 164.5 Q451 163 452.5 159 L457.5 141 Q458 138.5 456 138.3Z" fill="#fff7dc" stroke="#6b3504" stroke-width="2.4" stroke-linejoin="round"/><path d="M449.5 138.8 L455 139.5" stroke="#6b3504" stroke-width="2"/><path d="M454.5 163.3 L478.3 163.3 L477 166.3 L455.5 166.3Z" fill="#6b3504"/><g stroke="#6b3504" stroke-width="1.6"><path d="M462.3 141.7h9.5 M461.3 145.7h9.5 M460.3 149.6h9.5 M459.3 153.6h9.5 M458.3 157.5h9.5"/></g><path d="M584 145 Q583 144 585 143 L597 137.5 Q598 137 599 137.5 L612 143 Q613 144 613 145 L613 159.5 Q613 160.5 612 161 L599 166.8 Q598 167.2 597 166.8 L585 161 Q583.5 160.5 583.5 159.5Z" fill="#ee8a00"/><path d="M590.8 152.5 L590.8 147.3 L604.3 140.8" stroke="#fff7dc" stroke-width="2.2" fill="none"/><g stroke="#fff7dc" stroke-width="1.4" fill="none"><path d="M602.5 160 V153.5 M601 155.5 L602.5 153 L604 155.5 M608.8 157 V150.5 M607.3 152.5 L608.8 150 L610.3 152.5 M600 162.5 L611 158"/></g><path d="M523 158h7l-3.5 4z" fill="#000"/><path d="M658 159h7l-3.5 4z" fill="#000"/><rect x="1333" y="101" width="8" height="8" fill="#6b3500" stroke="#fff0dc" stroke-width="0.7"/><rect x="1344" y="101" width="8" height="8" fill="#6b3500" stroke="#fff0dc" stroke-width="0.7"/><rect x="1333" y="112" width="8" height="8" fill="#6b3500" stroke="#fff0dc" stroke-width="0.7"/><rect x="1344" y="112" width="8" height="8" fill="#6b3500" stroke="#fff0dc" stroke-width="0.7"/><rect x="1355" y="112" width="8" height="8" fill="#6b3500" stroke="#fff0dc" stroke-width="0.7"/><rect x="1333" y="123" width="8" height="8" fill="#6b3500" stroke="#fff0dc" stroke-width="0.7"/><rect x="1344" y="123" width="8" height="8" fill="#6b3500" stroke="#fff0dc" stroke-width="0.7"/><rect x="1355" y="123" width="8" height="8" fill="#6b3500" stroke="#fff0dc" stroke-width="0.7"/></svg>
</body></html>
